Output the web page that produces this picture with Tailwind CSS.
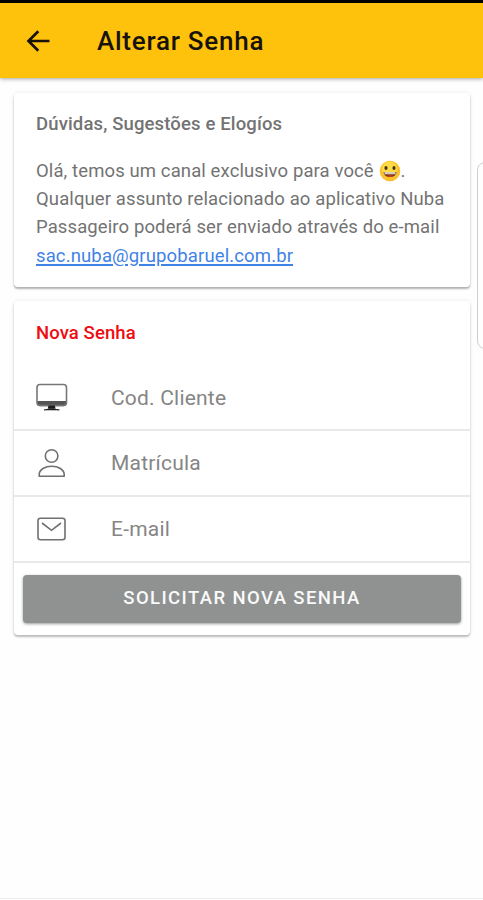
<!DOCTYPE html>
<html lang="pt-BR">
<head>
<meta charset="utf-8">
<title>Alterar Senha</title>
<script src="https://cdn.jsdelivr.net/npm/@tailwindcss/browser@4"></script>
</head>
<body class="bg-white font-[Roboto,sans-serif]">
<div class="relative flex flex-col w-[483px] h-[900px] overflow-hidden bg-[#fefefe]">
  <div class="h-[3px] shrink-0 bg-black"></div>
  <header class="flex h-[75px] shrink-0 items-center bg-[#ffc20c] pl-[26px] shadow-[0_1px_4px_rgba(0,0,0,0.35)]">
    <svg class="w-6 h-[22px]" viewBox="0 0 24 22" fill="none" stroke="#17130a" stroke-width="2.7"><path d="M23.5 11H2.5M12.3 1.2L2.5 11L12.3 20.8"/></svg>
    <h1 class="ml-[47px] text-[26px] leading-[30px] font-medium tracking-[0.75px] text-[#17130a] whitespace-nowrap">Alterar Senha</h1>
  </header>

  <main class="flex flex-col gap-[14px] pl-[14px] pr-[13px] pt-[15px]">
    <section class="h-[194px] rounded-[4px] bg-white pl-[22px] pt-[19px] shadow-[0_2px_2px_rgba(0,0,0,0.28),0_0_4px_rgba(0,0,0,0.08)] text-[#737373]">
      <h2 class="text-[18.5px] leading-6 font-medium tracking-[0.14px] whitespace-nowrap">Dúvidas, Sugestões e Elogíos</h2>
      <div class="mt-[21px] text-[18.5px] leading-[28.2px] tracking-[0.11px] whitespace-nowrap">
        <p>Olá, temos um canal exclusivo para você <svg class="inline-block w-[22px] h-[22px] align-[-5px]" viewBox="0 0 22 22"><circle cx="11" cy="11" r="10.3" fill="#fbc02d"/><circle cx="10.5" cy="9" r="7.5" fill="#ffdc45"/><ellipse cx="7" cy="8" rx="1.6" ry="2" fill="#4a3518"/><ellipse cx="15" cy="8" rx="1.6" ry="2" fill="#4a3518"/><path d="M4.5 12H17.5Q17 17 11 17T4.5 12Z" fill="#79351d"/><path d="M5.5 12H16.5V14.3H5.5Z" fill="#d9cdbb"/><path d="M8 16Q11 14.5 14 16Q11 17.6 8 16Z" fill="#e53b25"/></svg>.</p>
        <p>Qualquer assunto relacionado ao aplicativo Nuba</p>
        <p>Passageiro poderá ser enviado através do e-mail</p>
        <p><a class="text-[#3f83e6] tracking-[0.13px] underline decoration-[1.5px] underline-offset-[2px]">sac.nuba@grupobaruel.com.br</a></p>
      </div>
    </section>

    <section class="h-[334px] rounded-[4px] bg-white shadow-[0_2px_2px_rgba(0,0,0,0.24),0_0_4px_rgba(0,0,0,0.08)]">
      <h2 class="h-[64px] pl-[22px] pt-[20px] text-[18.5px] leading-6 font-medium tracking-[0.1px] text-[#ee0c10] whitespace-nowrap">Nova Senha</h2>
      <div class="flex h-[66px] items-center border-b-2 border-[#e9e9e9] pl-[22px] text-[#858585]">
        <svg class="w-8 h-7" viewBox="0 0 32 28"><path d="M1 18H30.5V20Q30.5 23.2 27.5 23.2H4Q1 23.2 1 20Z" fill="#555"/><rect x="1" y="1.5" width="29.5" height="21" rx="3" fill="none" stroke="#777" stroke-width="1.6"/><path d="M12.5 22.5H18.8L19.6 25.8H11.7Z" fill="#1c1c1c"/><path d="M8 26.9Q15.7 24.8 23.4 26.9Z" fill="#222" stroke="#222" stroke-width=".7"/></svg>
        <span class="ml-[43px] pt-[3px] text-[21px] tracking-[0.2px] whitespace-nowrap">Cod. Cliente</span>
      </div>
      <div class="flex h-[66px] items-center border-b-2 border-[#e9e9e9] pl-[22px] text-[#858585]">
        <svg class="w-8 h-[30px]" viewBox="0 0 32 30" fill="none" stroke="#707070" stroke-width="1.6"><circle cx="15.6" cy="8" r="6.3"/><path d="M3.2 28.2V26.5C3.2 21.5 9.2 18.3 15.7 18.3S28.2 21.5 28.2 26.5V28.2Z" stroke-linejoin="round"/></svg>
        <span class="ml-[43px] pt-px text-[21px] tracking-[0.2px] whitespace-nowrap">Matrícula</span>
      </div>
      <div class="flex h-[66px] items-center border-b-2 border-[#e9e9e9] pl-[22px] text-[#858585]">
        <svg class="w-8 h-6" viewBox="0 0 32 24" fill="none" stroke="#707070" stroke-width="1.6"><rect x="2" y="1.2" width="27" height="21.5" rx="2.5"/><path d="M6 6L15.5 13.3L25 6"/></svg>
        <span class="ml-[43px] pt-px text-[21px] tracking-[0.2px] whitespace-nowrap">E-mail</span>
      </div>
      <button class="mt-[12px] ml-[9px] block h-[48px] w-[438px] rounded-[4px] bg-[#909292] text-[18.5px] font-medium tracking-[1.4px] text-[#fafafa] shadow-[0_1px_3px_rgba(0,0,0,0.4)] whitespace-nowrap">SOLICITAR NOVA SENHA</button>
    </section>
  </main>
  <div class="absolute left-[477px] top-[162px] h-[187px] w-4 rounded-l-[8px] border border-[#cfcfcf] bg-[#fefefe]"></div>
  <div class="mt-auto h-[2px] shrink-0 border-t border-[#eeeeee]"></div>
</div>
</body>
</html>
